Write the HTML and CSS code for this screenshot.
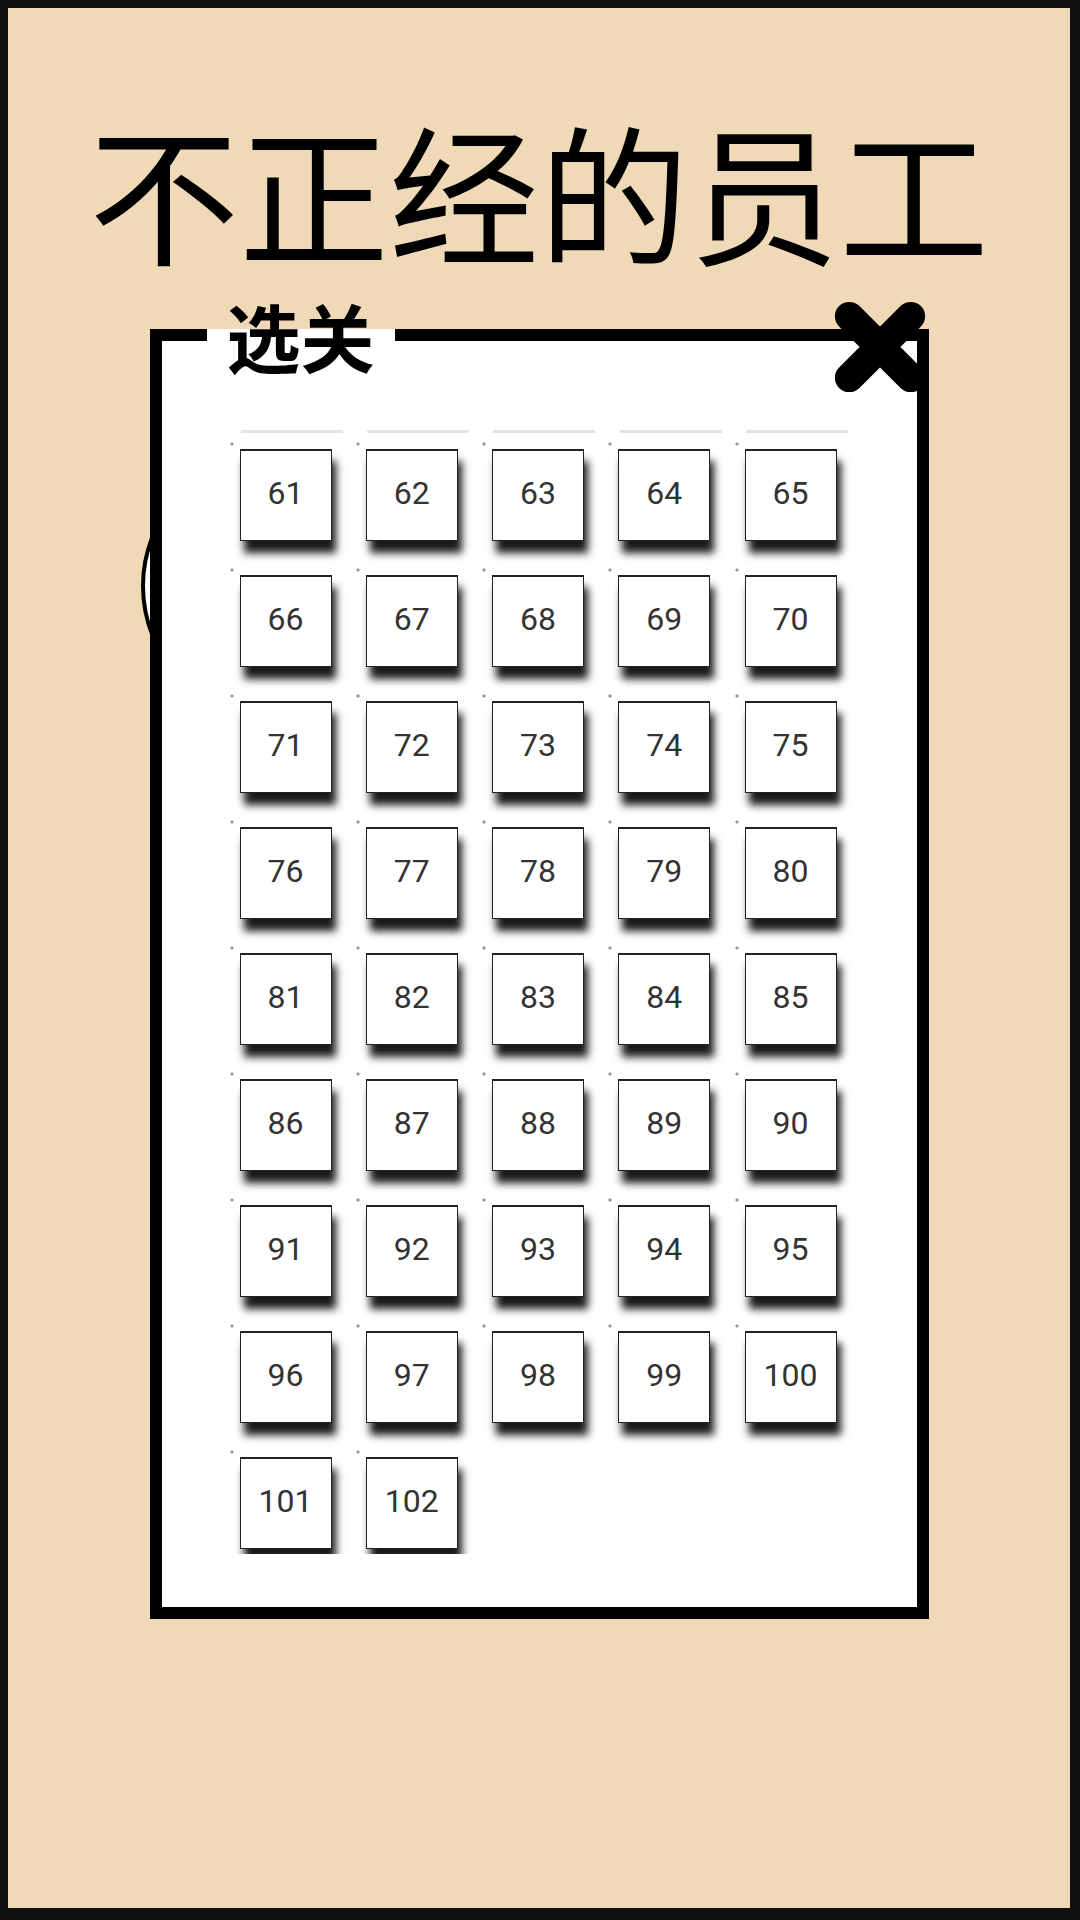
FILE: index.html
```html
<!DOCTYPE html>
<html>
<head>
	<meta charset="utf-8">
	<title>不正经的员工</title>
	<link rel="stylesheet" href="styles.css">
</head>
<body>
	<div class="screen">
		<h1 class="game-title">不正经的员工</h1>

		<!-- round start button of the menu, mostly hidden behind the dialog -->
		<div class="menu-disc"></div>

		<fieldset class="level-dialog">
			<legend>选关</legend>
			<div class="level-scroll">
				<div class="level-grid" id="levelGrid"></div>
			</div>
		</fieldset>

		<button class="close-btn" aria-label="关闭">
			<svg viewBox="0 0 100 100" width="96" height="96">
				<path d="M18 18 L82 82 M82 18 L18 82" stroke="#000" stroke-width="30" stroke-linecap="round" fill="none"/>
			</svg>
		</button>
	</div>

	<script type="text/javascript">
		const grid = document.getElementById('levelGrid');
		for (let i = 61; i <= 102; i++) {
			const cell = document.createElement('div');
			cell.className = 'level-cell';
			const tile = document.createElement('a');
			tile.href = '#';
			tile.className = 'level-tile';
			tile.textContent = i;
			cell.appendChild(tile);
			grid.appendChild(cell);
		}
	</script>
</body>
</html>
```

FILE: styles.css
```css
body{
	margin: 0;
	background: #000;
}
.screen{
	position: relative;
	width: 1080px;
	height: 1920px;
	box-sizing: border-box;
	background: #efd9b7;
	border-style: solid;
	border-color: #111;
	border-width: 8px 10px 12px 8px;
	overflow: hidden;
}
.game-title{
	margin: 106px 0 0;
	font-family: "Noto Sans CJK SC", sans-serif;
	font-weight: 400;
	font-size: 150px;
	line-height: 1;
	text-align: center;
	color: #000;
}
.menu-disc{
	position: absolute;
	left: 133px;
	top: 443px;
	width: 262px;
	height: 262px;
	border: 4px solid #000;
	border-radius: 50%;
	background: #fff;
}
.level-dialog{
	position: relative;
	z-index: 1;
	box-sizing: border-box;
	width: 779px;
	margin: 34px auto 0;
	padding: 0 0 53px 45px;
	border: 12px solid #000;
	background: #fff;
	min-width: 0;
}
.level-dialog legend{
	padding: 0 20px;
	font-family: "Noto Sans CJK SC", sans-serif;
	font-weight: 700;
	font-size: 74px;
	line-height: 1;
	color: #000;
}
/* the faint strip on top is the tail of the row scrolled out of view */
.level-scroll{
	width: 632px;
	height: 1112px;
	margin: 58px 0 0 23px;
	padding-top: 12px;
	overflow: hidden;
	background: repeating-linear-gradient(90deg, transparent 0 11px, #e3e3e3 11px 113px, transparent 113px 126.25px) 0 0 / 100% 3px no-repeat;
}
.level-grid{
	display: grid;
	grid-template-columns: repeat(5, 126.25px);
	grid-auto-rows: 126px;
}
.level-cell{
	background: radial-gradient(circle at 2px 2px, #9a9a9a 1.2px, transparent 2px) no-repeat;
}
.level-tile{
	display: flex;
	align-items: center;
	justify-content: center;
	box-sizing: border-box;
	width: 92px;
	height: 92px;
	margin: 7px 0 0 10px;
	padding-bottom: 6px;
	border: 1px solid #222;
	border-top-width: 2px;
	background: #fff;
	box-shadow: 4px 12px 8px rgba(0, 0, 0, 0.9);
	font-family: Roboto, sans-serif;
	font-size: 32px;
	color: #333;
	text-decoration: none;
}
.close-btn{
	position: absolute;
	z-index: 2;
	left: 824px;
	top: 291px;
	width: 96px;
	height: 96px;
	padding: 0;
	border: none;
	background: none;
	cursor: pointer;
}
.close-btn svg{
	display: block;
}
```
